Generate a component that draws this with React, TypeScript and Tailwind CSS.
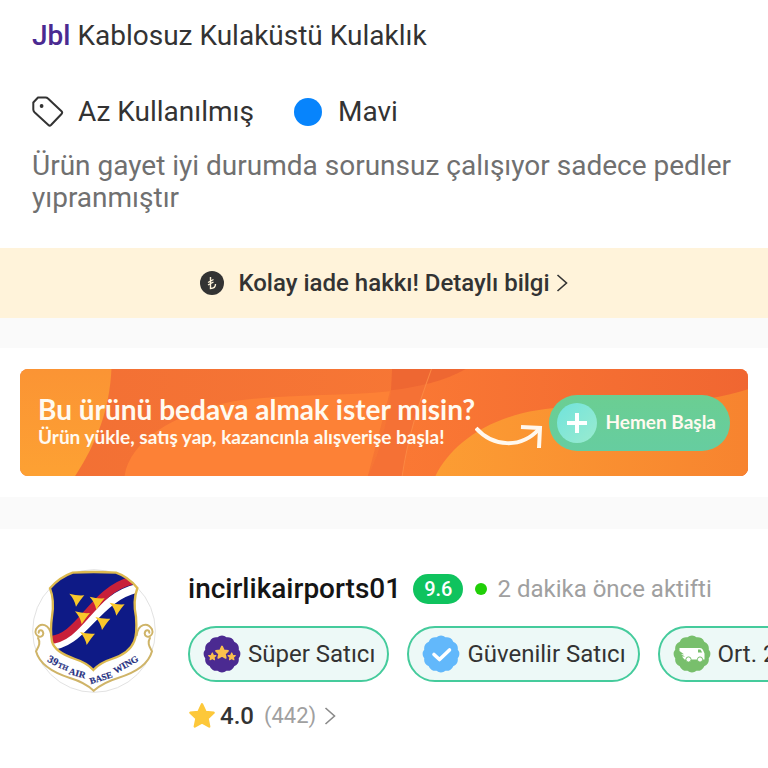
import React from "react";

const badges = [
  { id: "super", label: "Süper Satıcı", color: "#4b2a91" },
  { id: "trusted", label: "Güvenilir Satıcı", color: "#62b8fb" },
  { id: "shipping", label: "Ort. 2 saatte kargoda", color: "#78bf6c" },
];

const STAR = "M0 -10 L3 -3.6 L10 -2.8 L4.8 2.1 L6.2 9 L0 5.5 L-6.2 9 L-4.8 2.1 L-10 -2.8 L-3 -3.6 Z";
const PLANE = "M-2 -2 Q20 5 43 3 Q32 15 18 37 Q14 16 -2 -2 Z";
const SHIELD =
  "M90 85 Q118 52 158 38 Q220 34 288 38 Q324 50 352 84 Q338 125 348 170 Q352 225 342 245 Q328 280 275 297 Q240 308 220 330 Q200 308 165 297 Q105 277 96 245 Q90 210 96 170 Q104 120 90 85Z";

function sealPath(lobes: number, radius: number) {
  const points = Array.from({ length: lobes }, (_, i) => {
    const a = ((i + 0.5) / lobes) * Math.PI * 2 - Math.PI / 2;
    return [20 + Math.cos(a) * radius, 20 + Math.sin(a) * radius];
  });
  const start = points[lobes - 1];
  return `M${start[0]} ${start[1]}` + points.map(([x, y]) => `A6.8 6.8 0 0 1 ${x} ${y}`).join("") + "Z";
}

function SealIcon({ id, color }: { id: string; color: string }) {
  return (
    <svg viewBox="0 0 40 40" className="size-10 shrink-0" aria-hidden="true">
      <path d={sealPath(12, 17.3)} fill={color} />
      {id === "super" && (
        <g fill="#fbc04d" stroke="#fbc04d" strokeLinejoin="round" strokeWidth="3">
          <path d={STAR} transform="translate(20 18.5) scale(.6)" />
          <path d={STAR} transform="translate(10.3 22.5) scale(.36)" />
          <path d={STAR} transform="translate(29.7 22.5) scale(.36)" />
        </g>
      )}
      {id === "trusted" && (
        <path d="M13 20.5 L18.5 25.5 L28.5 16" fill="none" stroke="#fff" strokeWidth="3.6" strokeLinecap="round" strokeLinejoin="round" />
      )}
      {id === "shipping" && (
        <g>
          <path d="M7.5 14 H28 Q30 14 31 16 L32.5 19.5 V25.5 H12.5 L10 22.5 H13 L9 20.2 H12 L7.5 17 Z" fill="#fff" />
          <path d="M26 15.5 h2.4 l1.8 3 H26Z" fill="#78bf6c" />
          <circle cx="16.5" cy="25.5" r="2.6" fill="#fff" stroke="#78bf6c" />
          <circle cx="28" cy="25.5" r="2.6" fill="#fff" stroke="#78bf6c" />
        </g>
      )}
    </svg>
  );
}

function Chevron({ className }: { className: string }) {
  return (
    <svg viewBox="0 0 12 20" className={className} fill="none" stroke="currentColor" strokeWidth="1.6" aria-hidden="true">
      <path d="M1.5 2 L10.5 10 L1.5 18" />
    </svg>
  );
}

function TagIcon() {
  return (
    <svg viewBox="0 0 32 32" className="size-8 shrink-0" fill="none" stroke="#333" strokeWidth="2" strokeLinejoin="round" aria-hidden="true">
      <path d="M6 1.5 H13.5 Q15 1.5 16 2.5 L29.5 15.3 Q30.8 16.6 29.5 18 L19 29 Q17.7 30.2 16.4 29 L2.5 16.2 Q1.3 15 1.3 13.5 V6.5 Z" />
      <circle cx="9.6" cy="10" r="1.2" fill="#333" strokeWidth="1.4" />
    </svg>
  );
}

function BannerArt() {
  return (
    <svg viewBox="0 0 728 106" preserveAspectRatio="xMidYMid slice" className="absolute inset-0 h-full w-full" aria-hidden="true">
      <defs>
        <linearGradient id="amber" x1="0" y1="0" x2="0" y2="1">
          <stop offset="0" stopColor="#fb9434" />
          <stop offset="1" stopColor="#fda133" />
        </linearGradient>
        <linearGradient id="flame" x1="0" y1="0" x2="1" y2="0">
          <stop offset="0" stopColor="#fb7a34" />
          <stop offset="1" stopColor="#f06631" />
        </linearGradient>
        <linearGradient id="mid" x1="0" y1="0" x2="1" y2="0">
          <stop offset="0" stopColor="#f26f34" />
          <stop offset="1" stopColor="#fb7d35" />
        </linearGradient>
        <linearGradient id="hill" x1="0" y1="0" x2="1" y2="0">
          <stop offset="0" stopColor="#fc9d33" />
          <stop offset="1" stopColor="#f7832f" />
        </linearGradient>
      </defs>
      <rect width="728" height="106" fill="url(#mid)" />
      <path d="M107 106 C112 72 155 44 215 32 C260 25 320 27 370 22 L348 106Z" fill="#fd8136" />
      <path d="M0 0 H94 C92 40 80 72 58 106 H0Z" fill="url(#amber)" />
      <path d="M373 0 H728 V106 H348 C362 80 370 40 373 0Z" fill="url(#flame)" />
      <path d="M373 0 H411 C398 36 388 66 382 106 H348 C362 80 370 40 373 0Z" fill="#f57135" />
      <path d="M372 0 H445 C424 12 398 18 371 21Z" fill="#ee6732" />
      <path d="M411 0 C398 36 388 66 382 106" fill="none" stroke="#fb8843" />
      <path d="M415 106 C432 72 475 39 550 38 C610 36 680 36 728 19 V106Z" fill="url(#hill)" />
    </svg>
  );
}

function Emblem() {
  return (
    <svg viewBox="36 27 372 372" className="size-[124px] shrink-0" role="img" aria-label="39th Air Base Wing">
      <defs>
        <clipPath id="shield">
          <path d={SHIELD} />
        </clipPath>
      </defs>
      <circle cx="222" cy="213" r="184" fill="#fff" stroke="#e2e2e2" strokeWidth="3" />
      <g fill="none" stroke="#cfb468" strokeWidth="6" strokeLinecap="round">
        <path d="M94 226 C88 192 62 184 48 208 C40 228 68 240 70 220 C68 208 56 208 56 218" />
        <path d="M54 234 C64 250 54 262 48 274 C60 318 105 340 150 354 C190 366 206 378 221 392" />
        <path d="M350 226 C354 192 382 184 396 208 C404 228 376 240 374 220 C376 208 388 208 388 218" />
        <path d="M390 234 C380 250 390 262 396 274 C384 318 340 340 294 354 C254 366 238 378 221 392" />
      </g>
      <g clipPath="url(#shield)">
        <rect x="80" y="30" width="280" height="305" fill="#0e1a86" />
        <path d="M85 257 C190 258 225 112 356 84" fill="none" stroke="#fff" strokeWidth="26" />
        <path d="M85 240 C180 240 215 92 335 62" fill="none" stroke="#c8203a" strokeWidth="24" />
      </g>
      <path d={SHIELD} fill="none" stroke="#dcb94f" strokeWidth="7" />
      <g fill="#f9c72b">
        <path d={PLANE} transform="translate(150 103)" />
        <path d={PLANE} transform="translate(211 112)" />
        <path d={PLANE} transform="translate(271 130)" />
        <path d={PLANE} transform="translate(167 156)" />
        <path d={PLANE} transform="translate(228 173)" />
        <path d={PLANE} transform="translate(182 218)" />
      </g>
      <g fill="#26307f" stroke="#26307f" strokeWidth=".6" fontFamily="Liberation Serif, serif" fontWeight="700" fontSize="32">
        <text transform="translate(80 304) rotate(27)">39</text>
        <text transform="translate(112 321) rotate(22)" fontSize="22">TH</text>
        <text transform="translate(145 342) rotate(15)" fontSize="28">AIR</text>
        <text transform="translate(212 373) rotate(-18)" fontSize="27">BASE</text>
        <text transform="translate(287 342) rotate(-30)" fontSize="28">WING</text>
      </g>
    </svg>
  );
}

export default function App() {
  return (
    <main className="min-h-screen overflow-hidden bg-white font-['Roboto',sans-serif] text-[#333]">
      <section className="px-8 pt-4 pb-[34px]">
        <h1 className="text-[28px] leading-10">
          <a href="#jbl" className="font-medium text-[#4b2a91]">Jbl</a> Kablosuz Kulaküstü Kulaklık
        </h1>
        <div className="mt-9 flex items-center text-[28px] leading-10">
          <TagIcon />
          <span className="ml-3.5">Az Kullanılmış</span>
          <span className="ml-10 size-7 rounded-full bg-[#0784fc]" />
          <span className="ml-4">Mavi</span>
        </div>
        <p className="mt-[18px] text-[28px] leading-8 text-[#707070]">
          Ürün gayet iyi durumda sorunsuz çalışıyor sadece pedler yıpranmıştır
        </p>
      </section>

      <a href="#iade" className="flex h-[70px] items-center justify-center bg-[#fff3da] text-2xl font-medium">
        <svg viewBox="0 0 24 24" className="mr-3.5 size-6" aria-hidden="true">
          <circle cx="12" cy="12" r="12" fill="#333" />
          <path d="M10.5 6 V17.5 C14 17.5 15.5 15.5 15.5 13 M8 11.5 L13.5 8.5 M8 14 L13.5 11" fill="none" stroke="#fff3da" strokeWidth="1.4" />
        </svg>
        Kolay iade hakkı! Detaylı bilgi
        <Chevron className="ml-1.5 h-5 w-3" />
      </a>

      <div className="h-[30px] bg-[#fafafa]" />

      <section className="px-5 py-[21px]">
        <div className="relative flex h-[107px] items-center overflow-hidden rounded-lg px-[18px] font-['Lato',sans-serif] font-bold text-[#fffaf0]">
          <BannerArt />
          <div className="relative mb-1 shrink-0">
            <h2 className="text-[28px] leading-8">Bu ürünü bedava almak ister misin?</h2>
            <p className="text-[19px] leading-6">Ürün yükle, satış yap, kazancınla alışverişe başla!</p>
          </div>
          <svg viewBox="0 0 68 26" className="relative mt-7 h-[26px] w-[68px] shrink-0" fill="none" stroke="#fff8ee" strokeWidth="4" aria-hidden="true">
            <path d="M1 4 C18 23 46 25 64 5" />
            <path d="M46 3 L65 4 L64 24" />
          </svg>
          <button type="button" className="relative ml-auto flex h-14 shrink-0 items-center rounded-full bg-gradient-to-b from-[#6bce92] to-[#66cda0] pr-3.5 pl-2 text-[19px]">
            <span className="mr-2 flex size-10 items-center justify-center rounded-full bg-gradient-to-br from-[#6fe3dc] to-[#9aebcf]">
              <svg viewBox="0 0 20 20" className="size-5" stroke="#fff" strokeWidth="4" aria-hidden="true">
                <path d="M10 0 V20 M0 10 H20" />
              </svg>
            </span>
            Hemen Başla
          </button>
        </div>
      </section>

      <div className="h-8 bg-[#fafafa]" />

      <section className="flex items-start pt-10 pl-8">
        <Emblem />
        <div className="ml-8 min-w-0 flex-1">
          <div className="flex h-10 items-center whitespace-nowrap">
            <h2 className="text-[28px] font-medium text-[#151515]">incirlikairports01</h2>
            <span className="ml-3 flex h-[30px] items-center rounded-full bg-[#0fc35e] px-[11px] text-xl font-medium text-white">9.6</span>
            <span className="ml-3 size-3 rounded-full bg-[#20cf08]" />
            <span className="ml-2.5 text-2xl text-[#a0a0a0]">2 dakika önce aktifti</span>
          </div>
          <div className="mt-[17px] flex gap-[18px] overflow-hidden">
            {badges.map((badge) => (
              <button key={badge.id} type="button" className="flex h-14 shrink-0 items-center gap-1.5 rounded-full border-2 border-[#45cb9c] bg-[#edf9f7] px-3 text-2xl whitespace-nowrap">
                <SealIcon id={badge.id} color={badge.color} />
                {badge.label}
              </button>
            ))}
          </div>
          <a href="#yorumlar" className="mt-4 flex h-9 items-center text-2xl">
            <svg viewBox="-12 -12 24 24" className="size-7" fill="#fdc83a" stroke="#fdc83a" strokeWidth="2" strokeLinejoin="round" aria-hidden="true">
              <path d={STAR} />
            </svg>
            <span className="ml-1 font-medium">4.0</span>
            <span className="ml-2.5 text-[22px] text-[#a0a0a0]">(442)</span>
            <Chevron className="ml-2 h-5 w-3 text-[#8a8a8a]" />
          </a>
        </div>
      </section>
    </main>
  );
}
